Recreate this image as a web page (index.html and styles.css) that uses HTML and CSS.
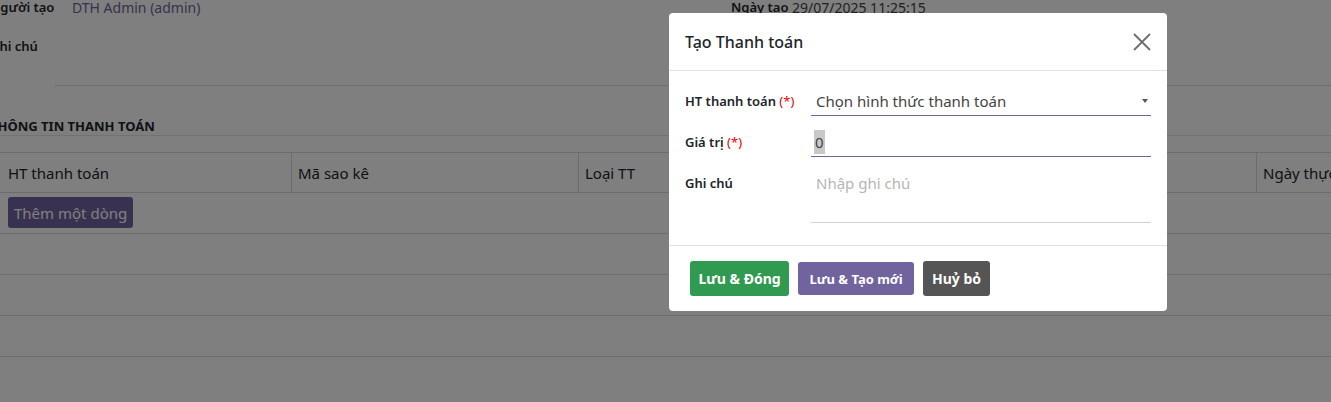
FILE: index.html
```html
<!DOCTYPE html>
<html lang="vi">
<head>
    <meta charset="UTF-8">
    <meta name="viewport" content="width=device-width, initial-scale=1.0">
    <title>Tạo Thanh toán</title>
    <link rel="stylesheet" href="styles.css">
</head>
<body>
    <div class="page">
        <div class="meta-row">
            <div class="meta-col">
                <span class="meta-label">Người tạo</span>
                <span class="meta-value link">DTH Admin (admin)</span>
            </div>
            <div class="meta-col">
                <span class="meta-label short">Ngày tạo</span>
                <span class="meta-value">29/07/2025 11:25:15</span>
            </div>
        </div>

        <div class="note-row">
            <span class="note-label">Ghi chú</span>
            <div class="note-field"></div>
        </div>

        <h3 class="section-title">THÔNG TIN THANH TOÁN</h3>

        <table class="lines">
            <thead>
                <tr>
                    <th class="c1">HT thanh toán</th>
                    <th class="c2">Mã sao kê</th>
                    <th class="c3">Loại TT</th>
                    <th>Ngày thực hiện</th>
                </tr>
            </thead>
            <tbody>
                <tr><td colspan="4"><button class="btn-add">Thêm một dòng</button></td></tr>
                <tr><td colspan="4"></td></tr>
                <tr><td colspan="4"></td></tr>
                <tr><td colspan="4"></td></tr>
            </tbody>
        </table>
    </div>

    <div class="backdrop">
        <div class="modal">
            <div class="modal-header">
                <h4 class="modal-title">Tạo Thanh toán</h4>
                <button class="close" aria-label="Close">
                    <svg width="18" height="18" viewBox="0 0 18 18">
                        <path d="M1 1L17 17M17 1L1 17" stroke="#6c6c6c" stroke-width="1.8" fill="none"/>
                    </svg>
                </button>
            </div>
            <div class="modal-body">
                <div class="form-row">
                    <label>HT thanh toán <span class="req">(*)</span></label>
                    <div class="field select">
                        <span>Chọn hình thức thanh toán</span>
                        <span class="caret"></span>
                    </div>
                </div>
                <div class="form-row">
                    <label>Giá trị <span class="req">(*)</span></label>
                    <div class="field"><span class="selected">0</span></div>
                </div>
                <div class="form-row">
                    <label>Ghi chú</label>
                    <div class="field textarea"><span class="placeholder">Nhập ghi chú</span></div>
                </div>
            </div>
            <div class="modal-footer">
                <button class="btn btn-green">Lưu &amp; Đóng</button>
                <button class="btn btn-purple">Lưu &amp; Tạo mới</button>
                <button class="btn btn-dark">Huỷ bỏ</button>
            </div>
        </div>
    </div>
</body>
</html>
```

FILE: styles.css
```css
body {
    margin: 0;
    font-family: "Noto Sans", "Open Sans", sans-serif;
    font-size: 14px;
    color: #212529;
    background: #fff;
    overflow: hidden;
}
.page {
    margin: -4px 0 0 -10px;
}
.meta-row {
    display: flex;
    height: 22px;
    align-items: center;
}
.meta-col {
    display: flex;
    flex-shrink: 0;
    align-items: center;
    width: 741px;
}
.meta-label {
    width: 82px;
    font-weight: 600;
    font-size: 13px;
}
.meta-label.short {
    width: 61px;
}
.meta-value {
    font-size: 14px;
    color: #444;
}
.meta-value.link {
    color: #71639e;
}
.note-row {
    display: flex;
    margin-top: 18px;
}
.note-label {
    width: 65px;
    font-weight: 600;
    font-size: 13px;
    line-height: 20px;
}
.note-field {
    flex: 1;
    height: 49px;
    border-bottom: 1px solid #d8d8d8;
}
.section-title {
    margin: 31px 0 0;
    font-size: 13px;
    font-weight: 700;
    line-height: 18px;
    border-bottom: 1px solid #e4e4e4;
}
.lines {
    margin: 16px 0 0 10px;
    width: calc(100% + 40px);
    border-collapse: collapse;
}
.lines th {
    height: 39px;
    padding: 0 6px;
    text-align: left;
    font-weight: 400;
    font-size: 15px;
    white-space: nowrap;
    border-top: 1px solid #d8d8d8;
    border-bottom: 1px solid #d8d8d8;
    border-left: 1px solid #d8d8d8;
}
.lines th:first-child {
    border-left: none;
    padding-left: 8px;
}
.lines th.c1 { width: 277px; }
.lines th.c2 { width: 274px; }
.lines th.c3 { width: 665px; }
.lines td {
    height: 40px;
    padding: 0 8px;
    border-bottom: 1px solid #d8d8d8;
}
.lines tbody tr:first-child td {
    vertical-align: top;
    padding-top: 4px;
    height: 36px;
}
.btn-add {
    font-family: inherit;
    font-size: 15px;
    color: #fff;
    background: #71639e;
    border: none;
    border-radius: 3px;
    padding: 0 6px;
    height: 31px;
}

.backdrop {
    position: fixed;
    inset: 0;
    background: rgba(0, 0, 0, 0.5);
}
.modal {
    position: absolute;
    left: 669px;
    top: 13px;
    width: 498px;
    background: #fff;
    border-radius: 4px;
}
.modal-header {
    display: flex;
    align-items: center;
    justify-content: space-between;
    height: 57px;
    padding: 0 16px;
    border-bottom: 1px solid #dee2e6;
}
.modal-title {
    margin: 0;
    font-size: 16px;
    font-weight: 500;
    color: #212529;
}
.close {
    background: none;
    border: none;
    padding: 0;
    display: flex;
}
.modal-body {
    padding: 16px 16px 22px;
}
.form-row {
    display: grid;
    grid-template-columns: 126px 340px;
    margin-bottom: 12px;
}
.form-row:last-child {
    margin-bottom: 0;
}
.form-row label {
    font-weight: 600;
    font-size: 13px;
    line-height: 28px;
}
.req {
    color: #e00;
    font-weight: 400;
}
.field {
    height: 29px;
    display: flex;
    align-items: center;
    padding-left: 5px;
    box-sizing: border-box;
    font-size: 15px;
    color: #444;
    border-bottom: 1px solid #71639e;
}
.field.select {
    justify-content: space-between;
}
.caret {
    width: 0;
    height: 0;
    margin-right: 3px;
    border-left: 3px solid transparent;
    border-right: 3px solid transparent;
    border-top: 4px solid #555;
}
.selected {
    background: #c8c8c8;
    padding: 0 1px;
    margin-left: -2px;
    line-height: 24px;
}
.field.textarea {
    height: 54px;
    align-items: flex-start;
    padding-top: 4px;
    border-bottom-color: #d2d2d2;
}
.placeholder {
    color: #b5b5b5;
}
.modal-footer {
    display: flex;
    align-items: center;
    gap: 9px;
    height: 65px;
    padding: 0 21px;
    border-top: 1px solid #dee2e6;
}
.btn {
    font-family: inherit;
    font-weight: 700;
    color: #fff;
    border: none;
    border-radius: 3px;
    height: 35px;
    padding: 0;
    font-size: 14px;
    white-space: nowrap;
}
.btn-green { background: #309a51; width: 99px; }
.btn-purple { background: #71639e; font-size: 13px; height: 33px; width: 116px; }
.btn-dark { background: #555; width: 67px; }
```
